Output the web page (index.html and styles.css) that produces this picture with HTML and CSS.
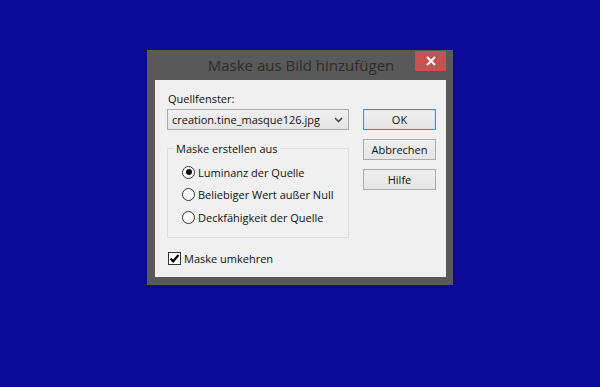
FILE: index.html
```html
<!DOCTYPE html>
<html lang="de">
<head>
  <meta charset="UTF-8">
  <title>Maske aus Bild hinzufügen</title>
  <link rel="stylesheet" href="styles.css">
</head>
<body>

  <div class="window" role="dialog" aria-labelledby="dlg-title">
    <div class="titlebar">
      <span id="dlg-title" class="title">Maske aus Bild hinzufügen</span>
      <button class="close" aria-label="Schließen">
        <svg width="10" height="10" viewBox="0 0 10 10"><path d="M1 1 L9 9 M9 1 L1 9" stroke="#fff" stroke-width="2"/></svg>
      </button>
    </div>

    <form class="client">
      <div class="left">
        <label class="caption" for="source">Quellfenster:</label>
        <div class="select">
          <span>creation.tine_masque126.jpg</span>
          <svg class="chevron" width="9" height="6" viewBox="0 0 9 6"><path d="M1 1 L4.5 4.5 L8 1" fill="none" stroke="#4a4a4a" stroke-width="1.6"/></svg>
        </div>

        <fieldset class="group">
          <legend>Maske erstellen aus</legend>
          <label class="option"><input type="radio" name="mode" checked> Luminanz der Quelle</label>
          <label class="option"><input type="radio" name="mode"> Beliebiger Wert außer Null</label>
          <label class="option"><input type="radio" name="mode"> Deckfähigkeit der Quelle</label>
        </fieldset>

        <label class="check">
          <span class="box">
            <svg width="11" height="11" viewBox="0 0 11 11"><path d="M1.5 5.5 L4.2 8.3 L9.5 2" fill="none" stroke="#000" stroke-width="2.2"/></svg>
          </span>
          Maske umkehren
        </label>
      </div>

      <div class="buttons">
        <button type="button" class="btn default">OK</button>
        <button type="button" class="btn">Abbrechen</button>
        <button type="button" class="btn">Hilfe</button>
      </div>
    </form>
  </div>

</body>
</html>
```

FILE: styles.css
```css
body {
  margin: 0;
  padding-top: 50px;
  background: #0a0a96;
  font-family: "Open Sans", "Noto Sans", sans-serif;
  font-size: 11px;
  color: #111;
}
.window {
  margin-left: 147px;
  width: 306px;
  height: 235px;
  background: #595959;
  box-sizing: border-box;
  padding: 0 7px 8px 8px;
}
.titlebar {
  position: relative;
  height: 30px;
  display: flex;
  align-items: center;
  justify-content: center;
}
.title {
  font-size: 15px;
  color: #2c2c2c;
  margin-left: 1px;
}
.close {
  position: absolute;
  right: 0;
  top: 1px;
  width: 31px;
  height: 20px;
  border: none;
  padding: 0;
  background: #c75050;
  display: flex;
  align-items: center;
  justify-content: center;
}
.client {
  margin: 0;
  height: 197px;
  background: #f0f0f0;
  display: flex;
  gap: 14px;
  padding: 11px 0 0 12px;
  box-sizing: border-box;
}
.left {
  width: 182px;
}
.caption {
  display: block;
  line-height: 15px;
  margin-left: 1px;
}
.select {
  margin-top: 3px;
  height: 21px;
  box-sizing: border-box;
  border: 1px solid #acacac;
  background: linear-gradient(#f0f0f0, #e5e5e5);
  display: flex;
  align-items: center;
  justify-content: space-between;
  padding: 0 4px 0 4px;
}
.chevron {
  margin-right: 1px;
}
.group {
  margin: 11px 0 0;
  padding: 5px 0 8px 6px;
  border: 1px solid #dcdcdc;
}
.group legend {
  padding: 0 2px;
  line-height: 15px;
}
.option {
  display: flex;
  align-items: center;
  height: 22.5px;
  margin-left: 8px;
}
.option input {
  appearance: none;
  margin: 0 3px 0 0;
  width: 13px;
  height: 13px;
  border: 1px solid #333;
  border-radius: 50%;
  background: #fff;
  display: grid;
  place-items: center;
}
.option input:checked::after {
  content: "";
  width: 6px;
  height: 6px;
  border-radius: 50%;
  background: #111;
}
.check {
  display: flex;
  align-items: center;
  margin-top: 13px;
  margin-left: 1px;
  line-height: 15px;
}
.box {
  width: 13px;
  height: 13px;
  box-sizing: border-box;
  border: 1px solid #333;
  background: #fff;
  margin-right: 3px;
  display: flex;
  align-items: center;
  justify-content: center;
}
.buttons {
  display: flex;
  flex-direction: column;
  gap: 9px;
  margin-top: 18px;
}
.btn {
  width: 73px;
  height: 21px;
  border: 1px solid #acacac;
  background: linear-gradient(#f0f0f0, #e5e5e5);
  font-family: inherit;
  font-size: 11px;
  color: #111;
  padding: 0;
}
.btn.default {
  border-color: #3c8fe6;
  box-shadow: inset 0 0 0 1px #cde4fb;
}
```
